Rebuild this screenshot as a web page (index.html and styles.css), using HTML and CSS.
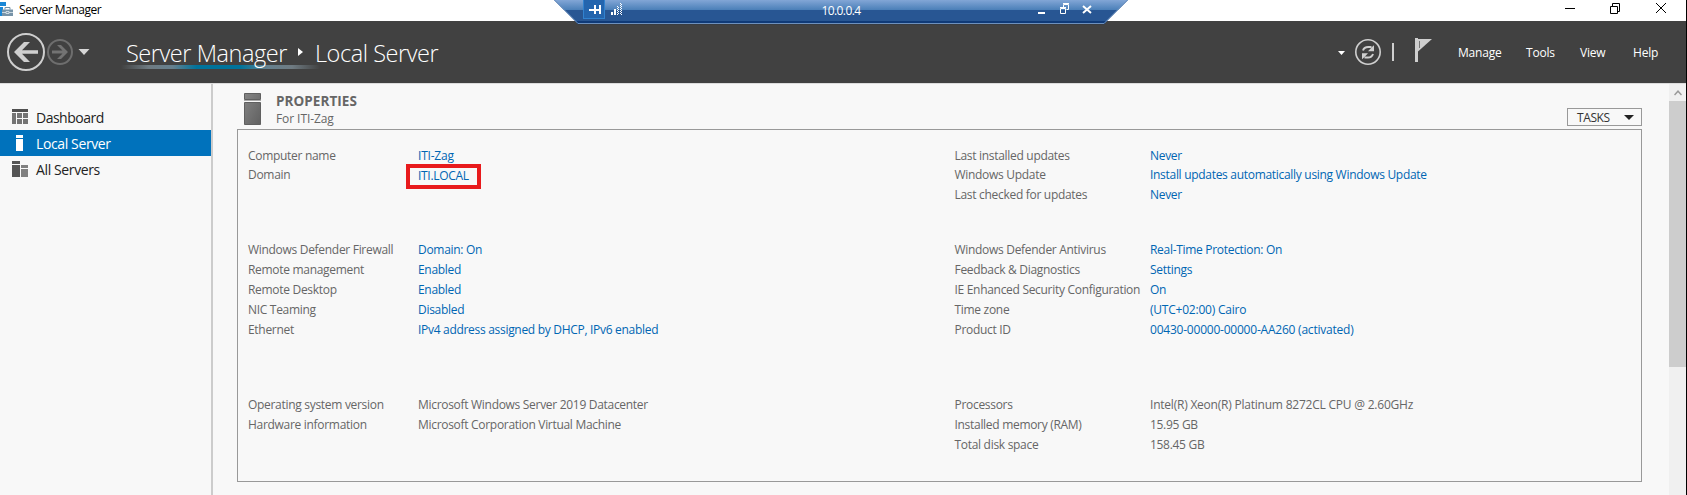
FILE: index.html
```html
<!DOCTYPE html>
<html lang="en">
<head>
<meta charset="utf-8">
<title>Server Manager</title>
<link rel="stylesheet" href="styles.css">
</head>
<body>
<div class="window">
  <header class="titlebar">
    <svg class="app-icon" width="13" height="16" viewBox="0 0 13 16"><path fill="#1b87d6" d="M0 0h6v4H0zM0 5h3v9H0z"/><path fill="#7793a8" d="M2 7.5h11V14H2z"/><path fill="none" stroke="#7793a8" d="M5 7.5v-2h5v2"/><path fill="none" stroke="#dfe8ee" d="M2 10.5h4m3 0h4M6 9.5h3v2H6z" stroke-width=".8"/></svg>
    <span class="app-title">Server Manager</span>
    <svg class="win-buttons" width="102" height="12" viewBox="0 0 102 12" fill="none" stroke="#000"><path d="M0 6.500h10M45.500 4.500h7v7h-7zM47.500 4.500v-3h7v8h-2"/><path d="M91 1l10 10M101 1L91 11"/></svg>
  </header>

  <div class="rdp-bar">
    <svg class="rdp-shape" width="574" height="26" viewBox="0 0 574 26">
      <defs>
        <linearGradient id="gloss" x1="0" y1="0" x2="0" y2="1"><stop offset="0" stop-color="#82a6d6"/><stop offset="1" stop-color="#4a7fb8"/></linearGradient>
      </defs>
      <path fill="#285693" d="M0 0h574l-24 24H24z"/>
      <path fill="url(#gloss)" d="M0 0h574l-10 10H10z"/>
      <path fill="#0f3a78" d="M21 21h532l-3 3H24z"/>
      <path fill="none" stroke="#6d90bd" d="M.5 0l23.500 23.500h526L573.500 0"/>
      <path fill="none" stroke="#383c42" d="M24 24.500h526"/>
      <rect x="29.500" y="-.5" width="21" height="19" fill="#2465ae" stroke="#3182cf"/>
      <g fill="#fff"><path d="M35 9h5v2h-5zM40 5h2v9h-2zM42 9h3v2h-3zM45 5h2v9h-2z"/><path d="M57 12h2v3h-2zM60 9h2v6h-2z"/></g>
      <path stroke="#fff" stroke-dasharray="1 1" fill="none" d="M63.500 6v9M64.500 7v8M66.500 3v12M67.500 4v11"/>
      <path fill="#fff" d="M484 12h7v2h-7z"/>
      <path fill="none" stroke="#fff" d="M506.500 8.500h5v5h-5zM506 7.500h6M509.500 7V4.500h5v5h-2M509 3.500h6"/>
      <path stroke="#fff" stroke-width="2" fill="none" d="M529 6l8 7M537 6l-8 7"/>
    </svg>
    <span class="rdp-host">10.0.0.4</span>
  </div>

  <nav class="toolbar">
    <svg class="nav-buttons" width="84" height="40" viewBox="0 0 84 40" fill="none">
      <circle cx="20" cy="20" r="18" stroke="#cfcfcf" stroke-width="2"/>
      <path fill="#cfcfcf" d="M8 20l10-10h6l-8 8.200H32v3.600H16l8 8.200h-6z"/>
      <circle cx="54" cy="20" r="12" stroke="#6e6e6e" stroke-width="2"/>
      <path fill="#737373" d="M62 20l-7-7h-4l5.500 5.500H46v3h10.500L51 27h4z"/>
      <path fill="#d6d6d6" d="M72.500 17h11L78 23z"/>
    </svg>
    <div class="crumbs"><span class="crumb-root">Server Manager</span><svg class="crumb-arrow" width="6" height="8" viewBox="0 0 6 8"><path fill="#fff" d="M0 0l5 4-5 4z"/></svg><span class="crumb-page">Local Server</span></div>
    <svg class="status-icons" width="96" height="30" viewBox="0 0 96 30" fill="none">
      <path fill="#fff" d="M0 14h7l-3.500 4z"/>
      <circle cx="30" cy="15" r="12.200" stroke="#cfcfcf" stroke-width="1.600"/>
      <path stroke="#cfcfcf" stroke-width="2" d="M25 13.500c1-3 3-3.500 5.200-3.500h3.300M35 17c-1 3-3 3.500-5.200 3.500h-3.300"/>
      <path fill="#cfcfcf" d="M30 14.300h6V8.200l-2 1.800zM30 16.200H24v6l2-1.800z"/>
      <path fill="#cfcfcf" d="M54 6h2v18h-2zM77 1h3v24h-3z"/>
      <path fill="#cfcfcf" d="M80 2h14L80 14.500z"/>
      <path stroke="#777" d="M81.500 4v7"/>
    </svg>
    <div class="menu"><span>Manage</span><span>Tools</span><span>View</span><span>Help</span></div>
  </nav>

  <div class="workspace">
    <aside class="sidebar">
      <div class="side-item"><svg width="16" height="16" viewBox="0 0 16 16"><path fill="#505050" d="M0 0h16v3H0z"/><path fill="#747474" d="M0 4h4v11H0zM5 4h5v5H5zM11 4h5v5h-5zM5 10h5v5H5zM11 10h5v5h-5z"/></svg><span>Dashboard</span></div>
      <div class="side-item selected"><svg width="16" height="16" viewBox="0 0 16 16"><path fill="#fff" d="M4 0h7v3H4zM4 4h7v12H4z"/></svg><span>Local Server</span></div>
      <div class="side-item"><svg width="16" height="16" viewBox="0 0 16 16"><path fill="#555" d="M0 0h8v3H0zM0 4h8v12H0z"/><path fill="#808080" d="M9 4h7v3H9zM9 8h7v8H9z"/></svg><span>All Servers</span></div>
    </aside>
    <main class="content">
      <div class="tile-head">
        <svg class="tile-icon" width="17" height="32" viewBox="0 0 17 32"><defs><linearGradient id="tower" x1="0" y1="0" x2="1" y2="1"><stop offset="0" stop-color="#858585"/><stop offset="1" stop-color="#606060"/></linearGradient></defs><path fill="url(#tower)" stroke="#606060" d="M.5.5h16v6H.5zM.5 9.500h16v22H.5z"/><path fill="#aaa" d="M0 7h17v1H0z"/></svg>
        <div class="tile-titles"><div class="tile-title">PROPERTIES</div><div class="tile-sub">For ITI-Zag</div></div>
        <div class="tasks"><span>TASKS</span><svg width="10" height="5" viewBox="0 0 10 5"><path fill="#222" d="M0 0h10L5 5z"/></svg></div>
      </div>
      <section class="panel">
        <div class="group g-first">
          <span>Computer name</span><a class="wide">ITI-Zag</a><span>Last installed updates</span><a>Never</a>
          <span>Domain</span><a><span class="marked">ITI.LOCAL</span></a><span>Windows Update</span><a>Install updates automatically using Windows Update</a>
          <span></span><span></span><span>Last checked for updates</span><a>Never</a>
        </div>
        <div class="group g-second">
          <span>Windows Defender Firewall</span><a>Domain: On</a><span>Windows Defender Antivirus</span><a>Real-Time Protection: On</a>
          <span>Remote management</span><a>Enabled</a><span>Feedback &amp; Diagnostics</span><a>Settings</a>
          <span>Remote Desktop</span><a>Enabled</a><span>IE Enhanced Security Configuration</span><a>On</a>
          <span>NIC Teaming</span><a>Disabled</a><span>Time zone</span><a class="wide">(UTC+02:00) Cairo</a>
          <span>Ethernet</span><a>IPv4 address assigned by DHCP, IPv6 enabled</a><span>Product ID</span><a class="wide">00430-00000-00000-AA260 (activated)</a>
        </div>
        <div class="group g-third">
          <span>Operating system version</span><span>Microsoft Windows Server 2019 Datacenter</span><span>Processors</span><span class="wide">Intel(R) Xeon(R) Platinum 8272CL CPU @ 2.60GHz</span>
          <span>Hardware information</span><span>Microsoft Corporation Virtual Machine</span><span>Installed memory (RAM)</span><span>15.95 GB</span>
          <span></span><span></span><span>Total disk space</span><span>158.45 GB</span>
        </div>
      </section>
    </main>
    <div class="scrollbar"><div class="scroll-up"><svg width="8" height="6" viewBox="0 0 8 6"><path fill="none" stroke="#9a9a9a" stroke-width="1.500" d="M.5 5L4 1.200 7.500 5"/></svg></div><div class="scroll-thumb"></div></div>
  </div>
</div>
</body>
</html>
```
FILE: styles.css
```css
* { box-sizing: border-box; }
body { margin: 0; background: #f8f8f8; font-family: "Open Sans", "Noto Sans", sans-serif; font-size: 12px; color: #666; overflow: hidden; }
svg { display: block; flex: none; }
.window { position: relative; width: 1687px; height: 495px; display: flex; flex-direction: column; border-right: 1px solid #000; white-space: nowrap; }
.titlebar { height: 21px; flex: none; background: #fff; display: flex; align-items: flex-start; color: #000; }
.app-icon { margin-top: 2px; }
.app-title { margin-left: 6px; line-height: 20px; letter-spacing: -0.45px; }
.win-buttons { margin: 2px 19px 0 auto; }
.rdp-bar { position: absolute; left: 554px; top: 0; width: 574px; height: 26px; }
.rdp-host { position: absolute; left: 0; top: 0; width: 574px; text-align: center; line-height: 22px; color: #fff; letter-spacing: -0.6px; }

.toolbar { height: 62px; flex: none; background: #414141; display: flex; align-items: flex-start; color: #fff; }
.nav-buttons { margin: 11px 0 0 6px; }
.crumbs { display: flex; margin: 13px 0 0 31px; height: 35px; width: 340px; font-size: 23.500px; font-weight: 300; line-height: 38px; background: linear-gradient(90deg, #41414100, #6f7b82 14%, #66808e 26%, #00739b 38%, #00739b 60%, #66808e 74%, #6f7b82 86%, #41414100) 0 31px / 199px 4px no-repeat; }
.crumb-root { width: 177px; padding-left: 5px; letter-spacing: -0.45px; }
.crumb-arrow { margin: 14px 11px 0 0; }
.crumb-page { letter-spacing: -0.45px; }
.status-icons { margin: 16px 0 0 auto; }
.menu { display: grid; grid-template-columns: 68px 54px 53px 53px; margin-left: 24px; line-height: 20px; padding-top: 22px; letter-spacing: -0.2px; }

.workspace { flex: 1; min-height: 0; display: flex; border-top: 1px solid #dcdcdc; }
.sidebar { width: 213px; border-right: 2px solid #ccc; padding-top: 20px; font-size: 14px; color: #222; }
.side-item { display: flex; align-items: center; height: 26px; padding: 0 0 0 12px; gap: 8px; letter-spacing: -0.38px; line-height: 20px; }
.side-item span { padding-top: 2px; }
.side-item:first-child { letter-spacing: -0.5px; }
.side-item.selected { background: #0072bc; color: #fff; letter-spacing: -0.38px; }
.content { flex: 1; padding: 9px 27px 0 24px; }
.tile-head { display: flex; height: 36px; }
.tile-icon { margin: 0 15px 0 7px; }
.tile-title { font-size: 13.500px; font-weight: 700; line-height: 17px; letter-spacing: 0.05px; }
.tile-sub { line-height: 18px; letter-spacing: -0.08px; }
.tasks { margin: 15px 0 0 auto; width: 75px; height: 18px; border: 1px solid #999; display: flex; align-items: center; justify-content: space-between; padding: 0 7px 0 9px; color: #333; letter-spacing: -0.4px; }
.panel { border: 1px solid #999; height: 353px; padding: 16px 0 0 10px; letter-spacing: -0.3px; }
.group { display: grid; grid-template-columns: 170px 536.500px 195.500px 1fr; grid-auto-rows: 20px; line-height: 20px; }
.g-first { grid-template-rows: 19px 20px 20px; }
.g-second { margin-top: 35px; }
.g-third { margin-top: 55px; }
.group a { color: #0066b3; }
.group .wide { letter-spacing: -0.22px; }
.marked { display: inline-block; box-shadow: 0 0 0 4px #e81a1c; height: 17px; line-height: 16px; padding: 0 8px; margin: 3px 0 0 -8px; vertical-align: top; }

.scrollbar { width: 17px; background: #f0f0f0; }
.scroll-up { height: 17px; display: flex; align-items: center; justify-content: center; }
.scroll-thumb { height: 266px; background: #cdcdcd; }
```
